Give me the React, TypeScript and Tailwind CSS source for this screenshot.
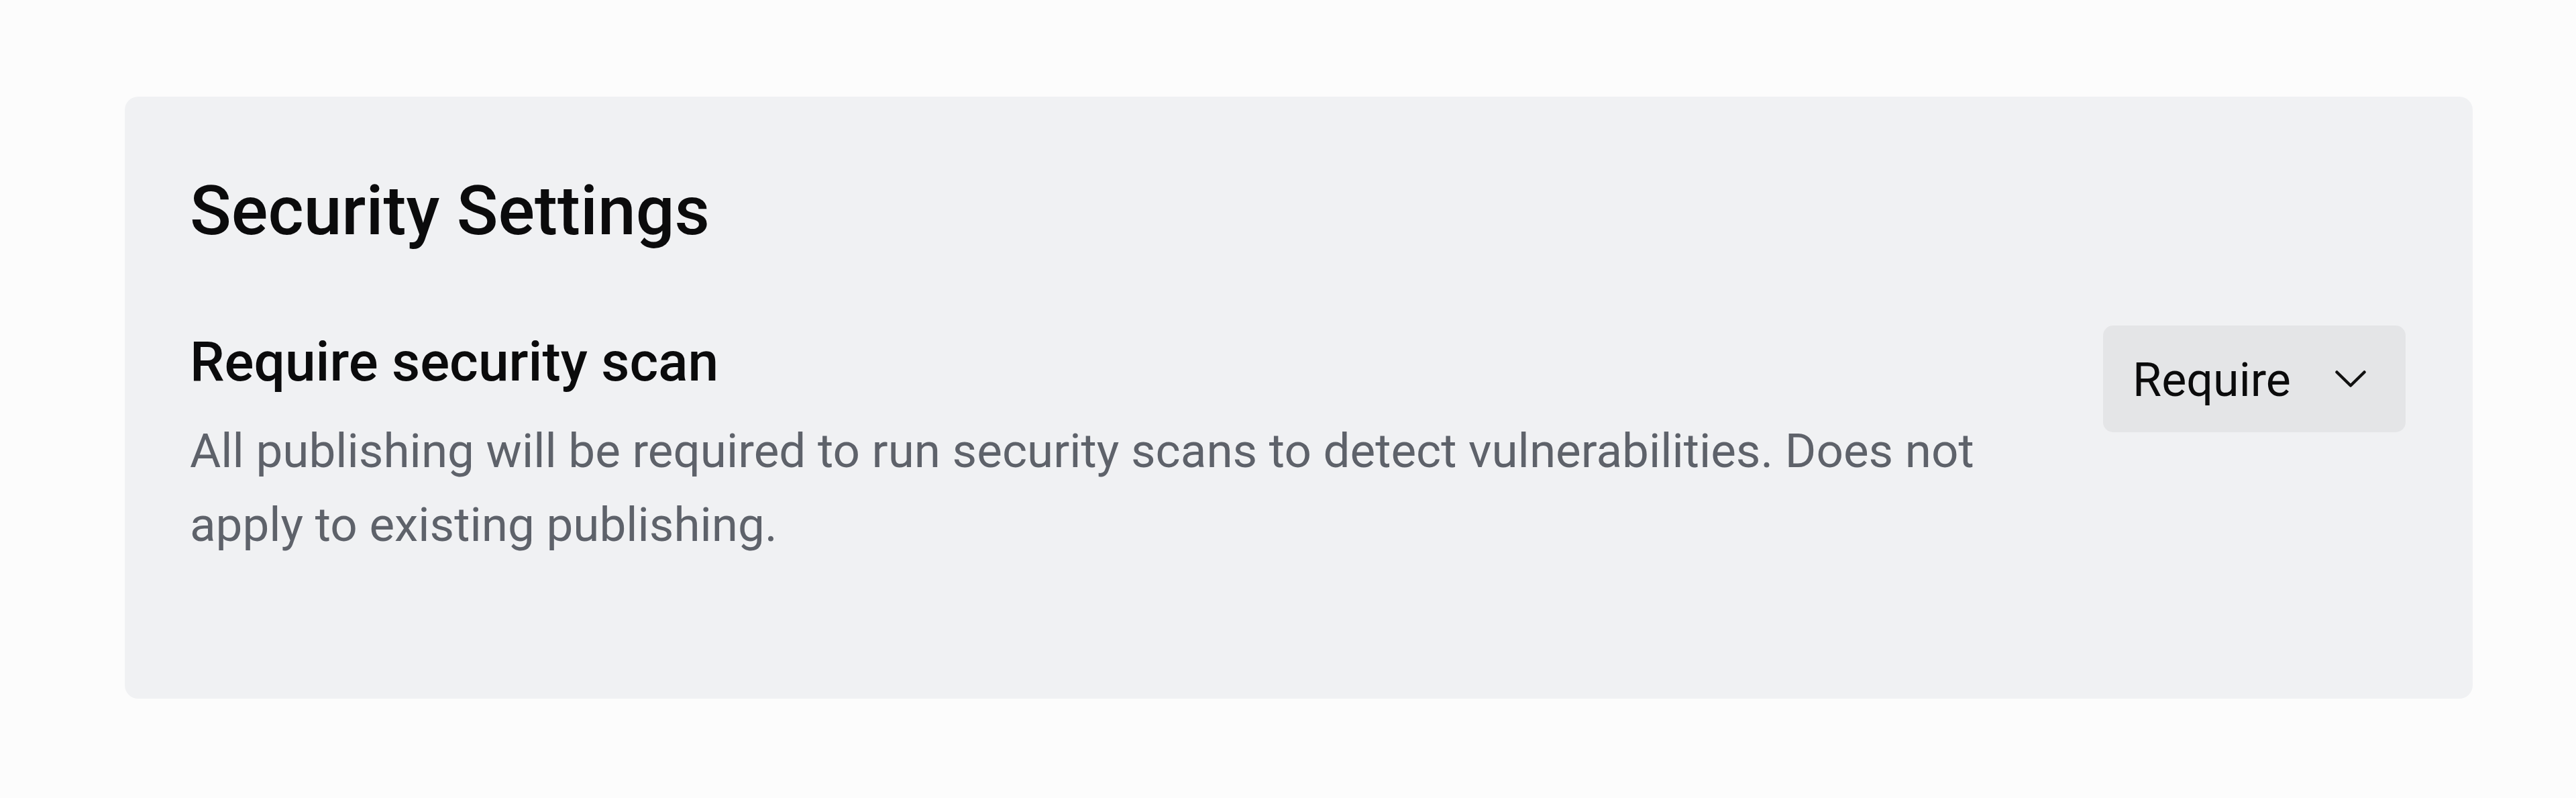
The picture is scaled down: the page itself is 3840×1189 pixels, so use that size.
import React from "react";

function Chevron() {
  return (
    <svg width="46" height="25" viewBox="0 0 46 25" fill="none" className="shrink-0">
      <polyline
        points="2.5,2.5 23,22.5 43.5,2.5"
        stroke="#111111"
        strokeWidth="4.5"
        strokeLinecap="round"
        strokeLinejoin="round"
      />
    </svg>
  );
}

export default function App() {
  return (
    <div className="min-h-[1189px] w-full bg-[#fcfcfc] pt-[144px] pl-[186px] font-['Roboto','Liberation_Sans',sans-serif]">
      <div className="w-[3500px] rounded-[20px] bg-[#f0f1f3] pt-[109px] pb-[204px] pl-[97px] pr-[100px]">
        <h1 className="text-[102px] leading-[122px] font-medium text-[#0b0b0c]">Security Settings</h1>
        <div className="mt-[108px] flex items-start justify-between gap-[100px]">
          <div className="flex-1">
            <h2 className="text-[82px] leading-[112px] font-medium text-[#0b0b0c]">Require security scan</h2>
            <p className="mt-[22px] text-[71px] leading-[110px] text-[#5e626a]">
              All publishing will be required to run security scans to detect vulnerabilities. Does not apply to existing publishing.
            </p>
          </div>
          <button className="mt-[2px] flex h-[159px] w-[451px] shrink-0 items-center justify-between rounded-[15px] bg-[#e4e5e7] pl-[44px] pr-[59px] text-[70px] text-[#0b0b0c]">
            <span className="pt-[4px]">Require</span>
            <Chevron />
          </button>
        </div>
      </div>
    </div>
  );
}
